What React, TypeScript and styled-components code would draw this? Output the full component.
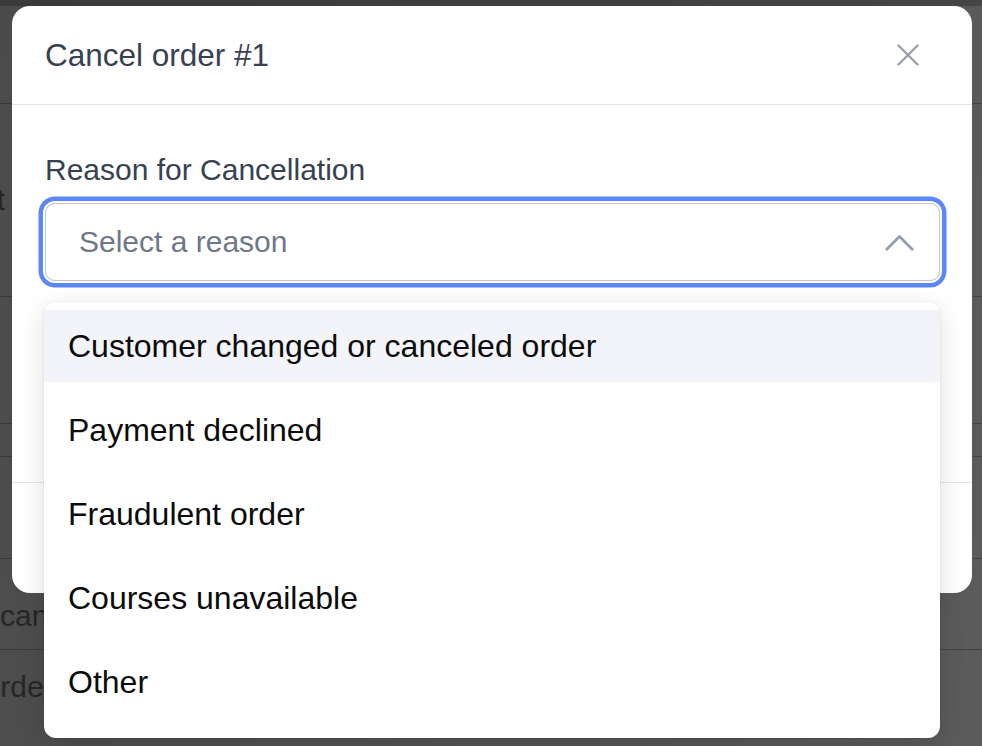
import React from 'react';
import styled, { createGlobalStyle } from 'styled-components';

const GlobalStyle = createGlobalStyle`
  * { box-sizing: border-box; }
  html, body { margin: 0; padding: 0; height: 100%; }
  body {
    font-family: "Liberation Sans", Arial, Helvetica, sans-serif;
    background: #ffffff;
    overflow: hidden;
  }
  #root { height: 100%; }
`;

const Screen = styled.div`
  position: relative;
  width: 100%;
  height: 100vh;
  overflow: hidden;
  background: #ffffff;
`;

/* ---------- page behind the dialog ---------- */
const PageBehind = styled.div`
  display: flex;
  flex-direction: column;
`;

const TopStrip = styled.div`
  height: 6px;
  background: #c4c4c4;
`;

const BgRow = styled.div<{ $h: number; $pt?: number; $align?: string }>`
  height: ${(p) => p.$h}px;
  padding-top: ${(p) => p.$pt ?? 0}px;
  border-bottom: 1px solid #c0c0c0;
  display: flex;
  align-items: ${(p) => p.$align ?? 'center'};
  font-size: 30px;
  color: #7e7e7e;
  white-space: nowrap;
`;

const ClippedEnd = styled.div`
  width: 5px;
  display: flex;
  justify-content: flex-end;
`;

const BgText = styled.span<{ $shift?: number }>`
  margin-left: ${(p) => p.$shift ?? 0}px;
`;

/* ---------- overlay and dialog ---------- */
const Overlay = styled.div`
  position: absolute;
  inset: 0;
  background: linear-gradient(100deg, rgba(0, 0, 0, 0.705), rgba(0, 0, 0, 0.645));
  display: flex;
  align-items: flex-start;
  padding: 6px 0 0 12px;
`;

const Modal = styled.div`
  width: 960px;
  background: #ffffff;
  border-radius: 18px;
  display: flex;
  flex-direction: column;
`;

const Header = styled.div`
  height: 99px;
  border-bottom: 1px solid #e2e5ea;
  padding: 0 53px 0 33px;
  display: flex;
  align-items: center;
  justify-content: space-between;
`;

const Title = styled.h2`
  margin: 0;
  font-size: 31.5px;
  font-weight: 400;
  color: #374151;
`;

const CloseButton = styled.button`
  width: 22px;
  height: 22px;
  padding: 0;
  border: none;
  background: transparent;
  display: flex;
  cursor: pointer;
`;

const Body = styled.div`
  padding: 47px 32px 201px 33px;
  display: flex;
  flex-direction: column;
  gap: 15px;
`;

const Label = styled.label`
  font-size: 30px;
  line-height: 36px;
  color: #374151;
`;

const SelectWrap = styled.div`
  position: relative;
`;

const SelectBox = styled.div`
  height: 78px;
  border: 1px solid #c3c6cc;
  border-radius: 10px;
  box-shadow: 0 0 0 2px #ffffff, 0 0 0 6.5px #5b87f7;
  padding: 0 25px 0 33px;
  display: flex;
  align-items: center;
  justify-content: space-between;
`;

const Placeholder = styled.span`
  font-size: 30px;
  color: #6f7788;
`;

const Menu = styled.ul`
  position: absolute;
  z-index: 10;
  top: calc(100% + 21px);
  left: -1px;
  right: 0;
  margin: 0;
  padding: 8px 0 20px;
  list-style: none;
  background: #ffffff;
  border-radius: 12px;
  box-shadow: 0 6px 26px rgba(0, 0, 0, 0.13), 0 0 0 1px rgba(0, 0, 0, 0.03);
  display: flex;
  flex-direction: column;
  gap: 12px;
`;

const Option = styled.li<{ $active?: boolean }>`
  height: 72px;
  padding: 0 24px;
  display: flex;
  align-items: center;
  font-size: 32px;
  color: #0b0b0b;
  background: ${(p) => (p.$active ? '#f3f4f9' : 'transparent')};
`;

const Footer = styled.div`
  height: 111px;
  border-top: 1px solid #e2e5ea;
  padding: 0 32px;
  display: flex;
  align-items: center;
  justify-content: flex-end;
  gap: 16px;
`;

const FooterButton = styled.button<{ $primary?: boolean }>`
  font-family: inherit;
  font-size: 26px;
  padding: 14px 26px;
  border-radius: 10px;
  border: 1px solid ${(p) => (p.$primary ? '#dc2626' : '#d1d5db')};
  background: ${(p) => (p.$primary ? '#dc2626' : '#ffffff')};
  color: ${(p) => (p.$primary ? '#ffffff' : '#374151')};
`;

const XIcon = () => (
  <svg width="22" height="22" viewBox="0 0 22 22" fill="none">
    <path d="M1.5 1.5 L20.5 20.5 M20.5 1.5 L1.5 20.5" stroke="#959cab" strokeWidth="2.2" strokeLinecap="round" />
  </svg>
);

const ChevronUp = () => (
  <svg width="29" height="17" viewBox="0 0 29 17" fill="none">
    <path d="M1.8 15.2 L14.5 2.5 L27.2 15.2" stroke="#959cab" strokeWidth="2.8" strokeLinecap="round" strokeLinejoin="round" />
  </svg>
);

const reasons = [
  'Customer changed or canceled order',
  'Payment declined',
  'Fraudulent order',
  'Courses unavailable',
  'Other',
];

export default function App() {
  return (
    <Screen>
      <GlobalStyle />
      <PageBehind>
        <TopStrip />
        <BgRow $h={98} />
        <BgRow $h={193}>
          <ClippedEnd>
            <BgText>Product</BgText>
          </ClippedEnd>
        </BgRow>
        <BgRow $h={127} />
        <BgRow $h={33} />
        <BgRow $h={102} />
        <BgRow $h={91} $pt={24}>
          <BgText>cancelled</BgText>
        </BgRow>
        <BgRow $h={120} $pt={20} $align="flex-start">
          <BgText $shift={-23}>Order details</BgText>
        </BgRow>
      </PageBehind>

      <Overlay>
        <Modal role="dialog" aria-modal="true">
          <Header>
            <Title>Cancel order #1</Title>
            <CloseButton aria-label="Close">
              <XIcon />
            </CloseButton>
          </Header>
          <Body>
            <Label>Reason for Cancellation</Label>
            <SelectWrap>
              <SelectBox>
                <Placeholder>Select a reason</Placeholder>
                <ChevronUp />
              </SelectBox>
              <Menu>
                {reasons.map((r, i) => (
                  <Option key={r} $active={i === 0}>
                    {r}
                  </Option>
                ))}
              </Menu>
            </SelectWrap>
          </Body>
          <Footer>
            <FooterButton>Close</FooterButton>
            <FooterButton $primary>Cancel order</FooterButton>
          </Footer>
        </Modal>
      </Overlay>
    </Screen>
  );
}
